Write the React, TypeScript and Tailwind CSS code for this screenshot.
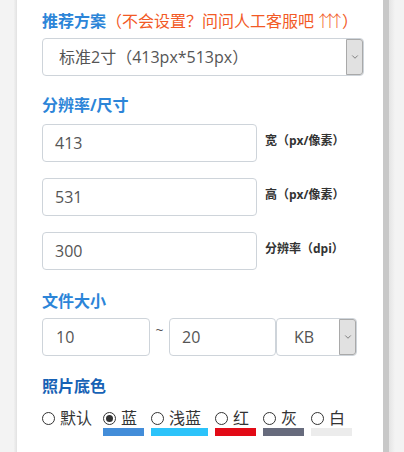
import { ChevronDown } from "lucide-react"

const font = { fontFamily: '"Open Sans", "Noto Sans CJK SC", sans-serif' }

function Heading({ children, dark }: { children: React.ReactNode; dark?: boolean }) {
  return (
    <h2 className={`h-6 text-[16px] leading-6 font-bold ${dark ? "text-[#1762b5]" : "text-[#2c85d8]"}`}>
      {children}
    </h2>
  )
}

function Field({ value, className }: { value: string; className?: string }) {
  return (
    <div
      className={`flex h-[38px] items-center rounded-[4px] border border-[#ced4da] bg-white text-[16px] text-[#555] ${className ?? ""}`}
    >
      {value}
    </div>
  )
}

function Dropdown({ value, className, textClass }: { value: string; className?: string; textClass?: string }) {
  return (
    <div className={`flex h-[38px] items-stretch rounded-[4px] border border-[#ced4da] bg-white ${className ?? ""}`}>
      <div className={`flex flex-1 items-center text-[16px] text-[#555] ${textClass ?? ""}`}>{value}</div>
      <div className="flex w-[17px] items-center justify-center rounded-r-[3px] border border-[#a9a9a9] bg-[#e1e1e1]">
        <ChevronDown size={10} strokeWidth={1.5} className="text-[#444]" />
      </div>
    </div>
  )
}

const colors = [
  { name: "默认", bar: "", w: "w-[61px]", bw: "" },
  { name: "蓝", bar: "bg-[#438dd9]", w: "w-[48px]", bw: "w-[41px]", checked: true },
  { name: "浅蓝", bar: "bg-[#2cc3fa]", w: "w-[64px]", bw: "w-[57px]" },
  { name: "红", bar: "bg-[#e20a16]", w: "w-[48px]", bw: "w-[41px]" },
  { name: "灰", bar: "bg-[#676b7d]", w: "w-[48px]", bw: "w-[41px]" },
  { name: "白", bar: "bg-[#ececec]", w: "w-[41px]", bw: "w-[41px]" },
]

export default function App() {
  return (
    <div className="flex h-[452px] w-[404px] overflow-hidden bg-[#f3f3f3]" style={font}>
      <div className="w-[14px] shrink-0" />
      <div className="w-[3px] shrink-0 bg-gradient-to-r from-[#f0f0f0] to-[#e2e2e2]" />
      <main className="w-[366px] shrink-0 bg-white pt-2 pl-[25px]">
        <Heading>
          推荐方案
          <span className="font-normal text-[#f25a26]">
            （不会设置？问问人工客服吧
            <span className="mr-[6px] ml-[1px] font-['Noto_Sans_CJK_SC',sans-serif] font-light tracking-[-9px]">↑↑↑</span>）
          </span>
        </Heading>
        <Dropdown value="标准2寸（413px*513px）" className="mt-[6px] w-[322px]" textClass="pl-4" />

        <div className="mt-[17px]">
          <Heading>分辨率/尺寸</Heading>
        </div>
        <div className="mt-[7px] flex flex-col gap-4">
          {[
            ["413", "宽（px/像素）"],
            ["531", "高（px/像素）"],
            ["300", "分辨率（dpi）"],
          ].map(([v, label]) => (
            <div key={label} className="flex items-start gap-2">
              <Field value={v} className="w-[215px] pl-3" />
              <span className="pt-[7px] text-[12px] leading-5 font-bold text-[#333]">{label}</span>
            </div>
          ))}
        </div>

        <div className="mt-[19px]">
          <Heading>文件大小</Heading>
        </div>
        <div className="mt-[5px] flex items-start">
          <Field value="10" className="w-[108px] pl-[13px]" />
          <span className="w-[19px] pt-[4px] text-center text-[14px] leading-4 text-[#555]">~</span>
          <Field value="20" className="w-[107px] pl-[12px]" />
          <Dropdown value="KB" className="w-[81px]" textClass="pl-[17px]" />
        </div>

        <div className="mt-[18px]">
          <Heading dark>照片底色</Heading>
        </div>
        <div className="mt-[10px] flex">
          {colors.map((c) => (
            <div key={c.name} className={`flex shrink-0 flex-col ${c.w}`}>
              <label className="flex h-5 items-center text-[16px] leading-5 text-[#333]">
                <span className="flex h-[13px] w-[13px] items-center justify-center rounded-full border border-[#333] bg-white">
                  {c.checked && <span className="h-[7px] w-[7px] rounded-full bg-[#333]" />}
                </span>
                <span className="ml-[5px]">{c.name}</span>
              </label>
              {c.bar && <div className={`h-2 ${c.bar} ${c.bw}`} />}
            </div>
          ))}
        </div>
      </main>
      <div className="w-[6px] shrink-0 bg-[#c8c8c8]" />
      <div className="flex-1 bg-gradient-to-r from-[#e4e4e4] to-[#f3f3f3] to-40%" />
    </div>
  )
}
